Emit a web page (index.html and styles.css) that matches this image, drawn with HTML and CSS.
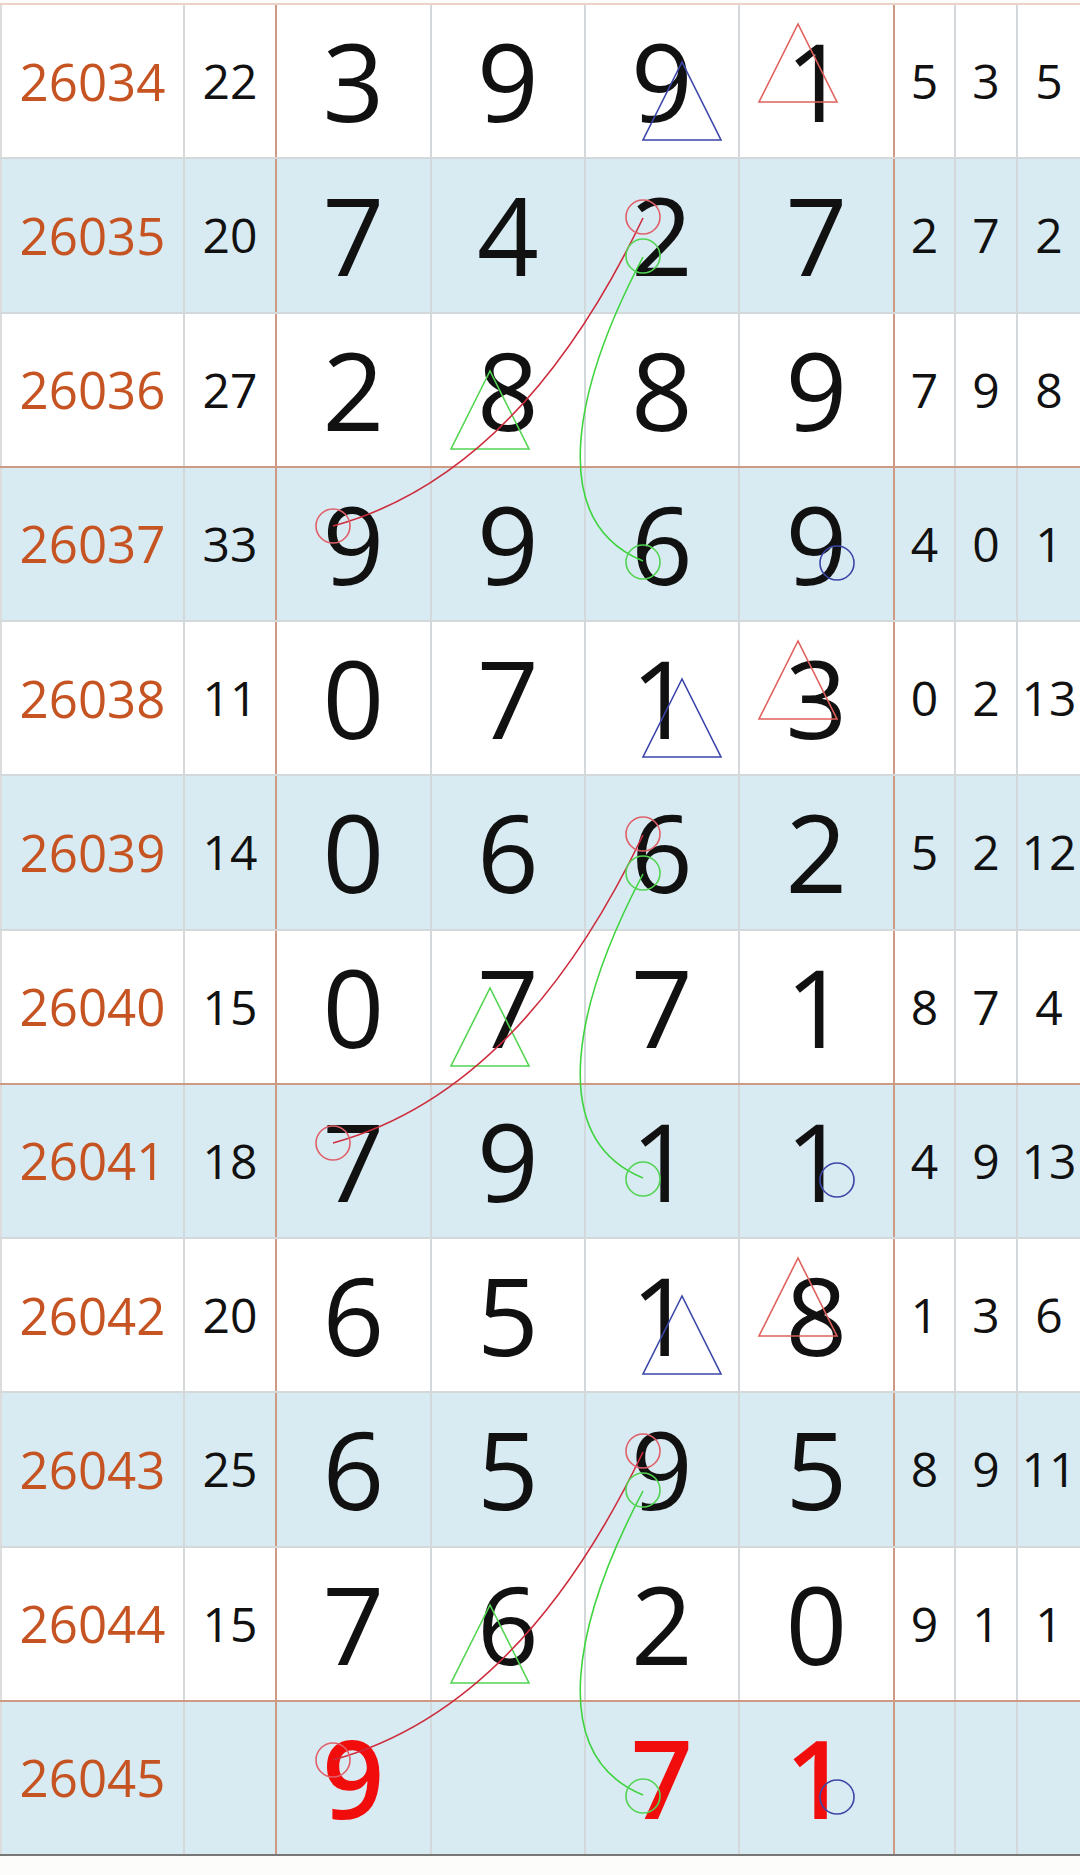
FILE: index.html
```html
<!DOCTYPE html>
<html lang="zh">
<head>
  <meta charset="UTF-8" />
  <meta name="viewport" content="width=device-width, initial-scale=1.0"/>
  <title>走势图</title>
  <link rel="stylesheet" href="styles.css">
</head>
<body>
  <div class="board">
    <div class="row">
      <div class="cell issue">26034</div><div class="cell sum split">22</div>
      <div class="cell big">3</div><div class="cell big">9</div><div class="cell big">9</div><div class="cell big split">1</div>
      <div class="cell small">5</div><div class="cell small">3</div><div class="cell small last">5</div>
    </div>
    <div class="row alt">
      <div class="cell issue">26035</div><div class="cell sum split">20</div>
      <div class="cell big">7</div><div class="cell big">4</div><div class="cell big">2</div><div class="cell big split">7</div>
      <div class="cell small">2</div><div class="cell small">7</div><div class="cell small last">2</div>
    </div>
    <div class="row sep">
      <div class="cell issue">26036</div><div class="cell sum split">27</div>
      <div class="cell big">2</div><div class="cell big">8</div><div class="cell big">8</div><div class="cell big split">9</div>
      <div class="cell small">7</div><div class="cell small">9</div><div class="cell small last">8</div>
    </div>
    <div class="row alt">
      <div class="cell issue">26037</div><div class="cell sum split">33</div>
      <div class="cell big">9</div><div class="cell big">9</div><div class="cell big">6</div><div class="cell big split">9</div>
      <div class="cell small">4</div><div class="cell small">0</div><div class="cell small last">1</div>
    </div>
    <div class="row">
      <div class="cell issue">26038</div><div class="cell sum split">11</div>
      <div class="cell big">0</div><div class="cell big">7</div><div class="cell big">1</div><div class="cell big split">3</div>
      <div class="cell small">0</div><div class="cell small">2</div><div class="cell small last">13</div>
    </div>
    <div class="row alt">
      <div class="cell issue">26039</div><div class="cell sum split">14</div>
      <div class="cell big">0</div><div class="cell big">6</div><div class="cell big">6</div><div class="cell big split">2</div>
      <div class="cell small">5</div><div class="cell small">2</div><div class="cell small last">12</div>
    </div>
    <div class="row sep">
      <div class="cell issue">26040</div><div class="cell sum split">15</div>
      <div class="cell big">0</div><div class="cell big">7</div><div class="cell big">7</div><div class="cell big split">1</div>
      <div class="cell small">8</div><div class="cell small">7</div><div class="cell small last">4</div>
    </div>
    <div class="row alt">
      <div class="cell issue">26041</div><div class="cell sum split">18</div>
      <div class="cell big">7</div><div class="cell big">9</div><div class="cell big">1</div><div class="cell big split">1</div>
      <div class="cell small">4</div><div class="cell small">9</div><div class="cell small last">13</div>
    </div>
    <div class="row">
      <div class="cell issue">26042</div><div class="cell sum split">20</div>
      <div class="cell big">6</div><div class="cell big">5</div><div class="cell big">1</div><div class="cell big split">8</div>
      <div class="cell small">1</div><div class="cell small">3</div><div class="cell small last">6</div>
    </div>
    <div class="row alt">
      <div class="cell issue">26043</div><div class="cell sum split">25</div>
      <div class="cell big">6</div><div class="cell big">5</div><div class="cell big">9</div><div class="cell big split">5</div>
      <div class="cell small">8</div><div class="cell small">9</div><div class="cell small last">11</div>
    </div>
    <div class="row sep">
      <div class="cell issue">26044</div><div class="cell sum split">15</div>
      <div class="cell big">7</div><div class="cell big">6</div><div class="cell big">2</div><div class="cell big split">0</div>
      <div class="cell small">9</div><div class="cell small">1</div><div class="cell small last">1</div>
    </div>
    <div class="row alt end">
      <div class="cell issue">26045</div><div class="cell sum split"></div>
      <div class="cell big hot">9</div><div class="cell big"></div><div class="cell big hot">7</div><div class="cell big split hot">1</div>
      <div class="cell small"></div><div class="cell small"></div><div class="cell small last"></div>
    </div>

    <!-- pattern marks drawn over the grid -->
    <svg class="marks" viewBox="0 0 1080 1851" width="1080" height="1851">
      <g id="group" fill="none" stroke-width="1.6">
        <polygon points="682,57 643,135 721,135" stroke="#3c46a8"/>
        <polygon points="798,19 759,97 837,97" stroke="#e0605c"/>
        <polygon points="490,366 451,444 529,444" stroke="#52d452"/>
        <path d="M643,213 Q520,470 333,521" stroke="#cc2c3c"/>
        <path d="M643,252 C575,381 545,516 643,556" stroke="#3fd43f"/>
        <circle cx="643" cy="212" r="17" stroke="#e0606a"/>
        <circle cx="643" cy="251" r="17" stroke="#52d452"/>
        <circle cx="333" cy="521" r="17" stroke="#e0606a"/>
        <circle cx="643" cy="557" r="17" stroke="#52d452"/>
        <circle cx="837" cy="558" r="17" stroke="#3c46a8"/>
      </g>
      <use href="#group" y="617"/>
      <use href="#group" y="1234"/>
    </svg>
  </div>
</body>
</html>
```

FILE: styles.css
```css
body { margin: 0; background: #fcfcfa; font-family: "Open Sans", "Noto Sans", sans-serif; }
.board { position: relative; margin-top: 3px; border-top: 2px solid #ecd2c8; width: 1080px; }
.row { display: grid; grid-template-columns: 185px 92px 155px 154px 154px 155px 61px 62px 62px; height: 154.25px; box-sizing: border-box; background: #fff; border-bottom: 2px solid #d3d8da; }
.row.alt { background: #d9ebf2; }
.row.sep { border-bottom-color: #cf9a84; }
.row.end { border-bottom-color: #777; }
.cell { display: flex; align-items: center; justify-content: center; box-sizing: border-box; border-right: 2px solid #d3d8da; line-height: 1; color: #111; }
.cell:first-child { border-left: 2px solid #dcdcdc; }
.cell.split { border-right-color: #cf9a84; }
.cell.last { border-right: none; }
.issue { font-size: 51px; color: #c65322; }
.sum { font-size: 48px; }
.big { font-size: 108px; font-weight: 500; }
.small { font-size: 48px; }
.hot { color: #f20d0d; font-weight: 600; }
.marks { position: absolute; left: 0; top: 0; pointer-events: none; }
```
